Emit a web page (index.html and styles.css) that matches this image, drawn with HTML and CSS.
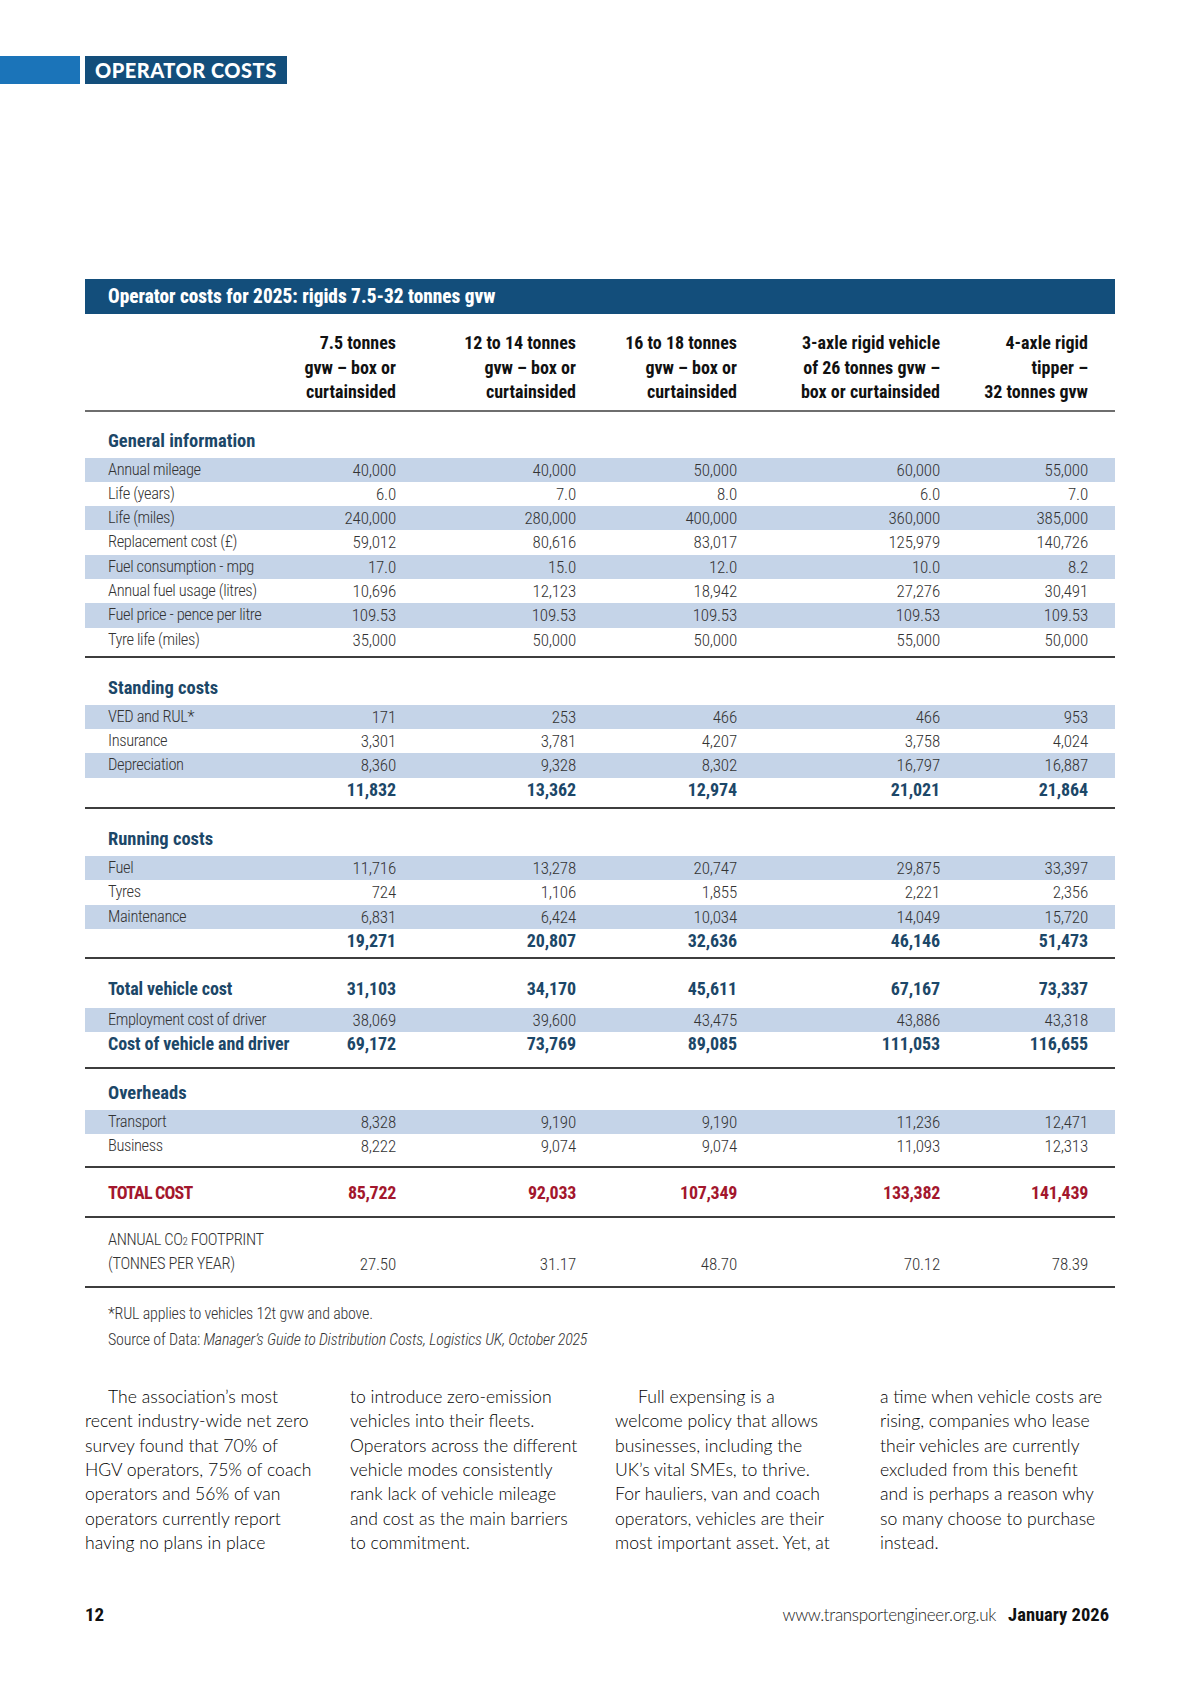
FILE: index.html
```html
<!DOCTYPE html>
<html lang="en">
<head>
<meta charset="utf-8">
<title>Operator costs</title>
<link rel="stylesheet" href="styles.css">
</head>
<body>
<div class="page">
  <header class="band">
    <div class="band-bar"></div>
    <div class="band-label">OPERATOR COSTS</div>
  </header>

  <section class="costs">
    <div class="costs-title">Operator costs for 2025: rigids 7.5-32 tonnes gvw</div>

    <div class="row head">
      <div></div>
      <div>7.5 tonnes<br>gvw – box or<br>curtainsided</div>
      <div>12 to 14 tonnes<br>gvw – box or<br>curtainsided</div>
      <div>16 to 18 tonnes<br>gvw – box or<br>curtainsided</div>
      <div>3-axle rigid vehicle<br>of 26 tonnes gvw –<br>box or curtainsided</div>
      <div>4-axle rigid<br>tipper –<br>32 tonnes gvw</div>
    </div>

    <div class="group g-general">
      <div class="row heading"><div>General information</div></div>
      <div class="row stripe"><div>Annual mileage</div><div>40,000</div><div>40,000</div><div>50,000</div><div>60,000</div><div>55,000</div></div>
      <div class="row"><div>Life (years)</div><div>6.0</div><div>7.0</div><div>8.0</div><div>6.0</div><div>7.0</div></div>
      <div class="row stripe"><div>Life (miles)</div><div>240,000</div><div>280,000</div><div>400,000</div><div>360,000</div><div>385,000</div></div>
      <div class="row"><div>Replacement cost (£)</div><div>59,012</div><div>80,616</div><div>83,017</div><div>125,979</div><div>140,726</div></div>
      <div class="row stripe"><div>Fuel consumption - mpg</div><div>17.0</div><div>15.0</div><div>12.0</div><div>10.0</div><div>8.2</div></div>
      <div class="row"><div>Annual fuel usage (litres)</div><div>10,696</div><div>12,123</div><div>18,942</div><div>27,276</div><div>30,491</div></div>
      <div class="row stripe"><div>Fuel price - pence per litre</div><div>109.53</div><div>109.53</div><div>109.53</div><div>109.53</div><div>109.53</div></div>
      <div class="row"><div>Tyre life (miles)</div><div>35,000</div><div>50,000</div><div>50,000</div><div>55,000</div><div>50,000</div></div>
    </div>

    <div class="group g-standing">
      <div class="row heading"><div>Standing costs</div></div>
      <div class="row stripe"><div>VED and RUL*</div><div>171</div><div>253</div><div>466</div><div>466</div><div>953</div></div>
      <div class="row"><div>Insurance</div><div>3,301</div><div>3,781</div><div>4,207</div><div>3,758</div><div>4,024</div></div>
      <div class="row stripe"><div>Depreciation</div><div>8,360</div><div>9,328</div><div>8,302</div><div>16,797</div><div>16,887</div></div>
      <div class="row total"><div></div><div>11,832</div><div>13,362</div><div>12,974</div><div>21,021</div><div>21,864</div></div>
    </div>

    <div class="group g-running">
      <div class="row heading"><div>Running costs</div></div>
      <div class="row stripe"><div>Fuel</div><div>11,716</div><div>13,278</div><div>20,747</div><div>29,875</div><div>33,397</div></div>
      <div class="row"><div>Tyres</div><div>724</div><div>1,106</div><div>1,855</div><div>2,221</div><div>2,356</div></div>
      <div class="row stripe"><div>Maintenance</div><div>6,831</div><div>6,424</div><div>10,034</div><div>14,049</div><div>15,720</div></div>
      <div class="row total"><div></div><div>19,271</div><div>20,807</div><div>32,636</div><div>46,146</div><div>51,473</div></div>
    </div>

    <div class="group g-vehicle">
      <div class="row total"><div>Total vehicle cost</div><div>31,103</div><div>34,170</div><div>45,611</div><div>67,167</div><div>73,337</div></div>
      <div class="row stripe gap-top"><div>Employment cost of driver</div><div>38,069</div><div>39,600</div><div>43,475</div><div>43,886</div><div>43,318</div></div>
      <div class="row total"><div>Cost of vehicle and driver</div><div>69,172</div><div>73,769</div><div>89,085</div><div>111,053</div><div>116,655</div></div>
    </div>

    <div class="group g-overheads">
      <div class="row heading"><div>Overheads</div></div>
      <div class="row stripe"><div>Transport</div><div>8,328</div><div>9,190</div><div>9,190</div><div>11,236</div><div>12,471</div></div>
      <div class="row"><div>Business</div><div>8,222</div><div>9,074</div><div>9,074</div><div>11,093</div><div>12,313</div></div>
    </div>

    <div class="group g-total">
      <div class="row grand"><div>TOTAL COST</div><div>85,722</div><div>92,033</div><div>107,349</div><div>133,382</div><div>141,439</div></div>
    </div>

    <div class="group g-co2">
      <div class="row co2"><div>ANNUAL CO<span class="sub">2</span> FOOTPRINT<br>(TONNES PER YEAR)</div><div>27.50</div><div>31.17</div><div>48.70</div><div>70.12</div><div>78.39</div></div>
    </div>

    <div class="notes">
      <p>*RUL applies to vehicles 12t gvw and above.</p>
      <p>Source of Data: <em>Manager’s Guide to Distribution Costs, Logistics UK, October 2025</em></p>
    </div>
  </section>

  <section class="article">
    <div class="col"><span class="indent">The association’s most</span><br>recent industry-wide net zero<br>survey found that 70% of<br>HGV operators, 75% of coach<br>operators and 56% of van<br>operators currently report<br>having no plans in place</div>
    <div class="col">to introduce zero-emission<br>vehicles into their fleets.<br>Operators across the different<br>vehicle modes consistently<br>rank lack of vehicle mileage<br>and cost as the main barriers<br>to commitment.</div>
    <div class="col"><span class="indent">Full expensing is a</span><br>welcome policy that allows<br>businesses, including the<br>UK’s vital SMEs, to thrive.<br>For hauliers, van and coach<br>operators, vehicles are their<br>most important asset. Yet, at</div>
    <div class="col">a time when vehicle costs are<br>rising, companies who lease<br>their vehicles are currently<br>excluded from this benefit<br>and is perhaps a reason why<br>so many choose to purchase<br>instead.</div>
  </section>

  <footer class="foot">
    <span class="folio">12</span>
    <span class="issue"><span class="url">www.transportengineer.org.uk</span><b>January 2026</b></span>
  </footer>
</div>
</body>
</html>
```

FILE: styles.css
```css
* { box-sizing: border-box; }
html, body { margin: 0; padding: 0; background: #fff; }
body {
  width: 1200px;
  font-family: Roboto, "Liberation Sans", Arial, sans-serif;
  font-stretch: 75%;
  color: #3a3a3a;
}
.page { padding: 56px 85px 0 0; }

/* top band */
.band { display: flex; height: 28px; }
.band-bar { width: 80px; background: #1b74b9; }
.band-label {
  margin-left: 5px;
  width: 202px;
  background: #134e7b;
  color: #fff;
  font-family: Lato, "Open Sans", sans-serif;
  font-stretch: normal;
  font-weight: 900;
  font-size: 20px;
  line-height: 28px;
  padding-left: 10px;
  letter-spacing: 0.5px;
}

/* costs table */
.costs { margin: 195px 0 0 85px; }
.costs-title {
  height: 35px;
  background: #134e7b;
  color: #fff;
  font-weight: 800;
  font-size: 19.3px;
  line-height: 35px;
  padding-left: 23px;
}
.row {
  display: grid;
  grid-template-columns: 210px 101px 180px 161px 203px 148px;
  padding-right: 27px;
  height: 24.3px;
  line-height: 24.3px;
  font-size: 17px;
  font-weight: 300;
  letter-spacing: -0.2px;
  color: #333;
  white-space: nowrap;
}
.row > div { text-align: right; }
.row > div:first-child { text-align: left; padding-left: 23px; font-size: 16.5px; letter-spacing: -0.4px; }
.row.stripe { background: #c5d4e8; }

.row.head {
  height: auto;
  line-height: 24.5px;
  padding-top: 17px;
  padding-bottom: 5px;
  border-bottom: 2px solid #6e6e6e;
  font-weight: 700;
  font-size: 18px;
  letter-spacing: 0;
  color: #111;
}
.row.heading {
  height: 24px;
  line-height: 24px;
  font-weight: 700;
  color: #1c4768;
  margin-bottom: 5px;
}
.row.heading > div:first-child { font-size: 18.5px; letter-spacing: 0; }
.row.total {
  font-weight: 700;
  font-size: 18px;
  letter-spacing: -0.1px;
  color: #1c4768;
}
.row.total > div:first-child { font-size: 18px; letter-spacing: -0.1px; }
.row.grand {
  font-weight: 700;
  font-size: 18px;
  letter-spacing: -0.3px;
  color: #a3172d;
}
.row.grand > div:first-child { font-size: 18px; letter-spacing: -0.8px; }
.row.co2 {
  height: 48px;
  line-height: 24px;
  align-items: end;
}
.sub { font-size: 11px; line-height: 0; }

.group { border-bottom: 2px solid #3d3d3d; }
.g-general  { padding: 17px 0 4px; }
.g-standing { padding: 18px 0 5px; }
.g-running  { padding: 18px 0 4px; }
.g-vehicle  { padding: 18px 0 11px; }
.g-vehicle .gap-top { margin-top: 6px; }
.g-overheads { padding: 12px 0 7px; }
.g-total    { padding: 13px 0 11px; }
.g-co2      { padding: 10px 0 10px; }

.notes {
  margin-top: 13px;
  padding-left: 23px;
  font-size: 16px;
  font-weight: 300;
  letter-spacing: -0.2px;
  line-height: 26px;
  color: #333;
}
.notes p { margin: 0; }

/* article */
.article {
  margin: 32px 0 0 85px;
  display: grid;
  grid-template-columns: repeat(4, 235px);
  column-gap: 30px;
  font-family: Lato, "Open Sans", sans-serif;
  font-stretch: normal;
  font-weight: 300;
  font-size: 17.6px;
  line-height: 24.3px;
  color: #000;
  white-space: nowrap;
}
.indent { padding-left: 23px; }

/* footer */
.foot {
  margin: 48px 0 0 85px;
  display: flex;
  justify-content: space-between;
  align-items: baseline;
  padding-right: 6px;
  line-height: 24px;
  color: #111;
}
.folio { font-weight: 700; font-size: 19px; }
.url {
  font-family: Lato, "Open Sans", sans-serif;
  font-stretch: normal;
  font-weight: 300;
  font-size: 17px;
  letter-spacing: -0.3px;
  color: #222;
  margin-right: 12px;
}
.issue b { font-weight: 700; font-size: 18.5px; }
```
